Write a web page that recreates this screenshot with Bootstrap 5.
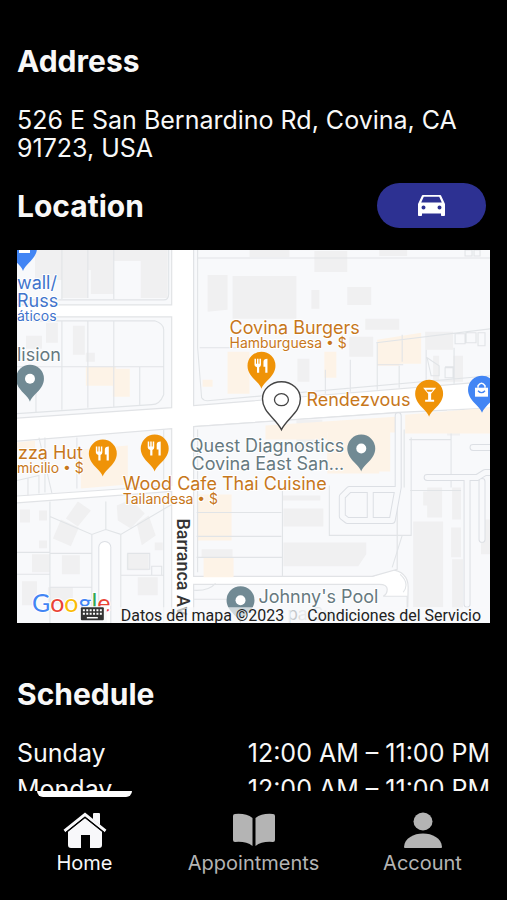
<!DOCTYPE html>
<html lang="en">
<head>
<meta charset="utf-8">
<meta name="viewport" content="width=device-width, initial-scale=1">
<title>Location details</title>
<link href="https://cdn.jsdelivr.net/npm/bootstrap@5.3.0/dist/css/bootstrap.min.css" rel="stylesheet">
<style>
  body { background: #000; color: #f8f8f8; font-family: Inter, "Open Sans", sans-serif; }
  .app-scroll { overflow-y: auto; min-height: 0; scrollbar-width: none; padding: 43px 17px 0; }
  .app-scroll::-webkit-scrollbar { display: none; }
  .section-title { font-size: 30px; line-height: 36px; font-weight: 700; margin: 0; }
  .body-text { font-size: 25px; line-height: 28px; }
  .address-text { margin: 27px 0 21px; }
  .btn-drive { background: #2d3192; width: 109px; height: 45px; }
  .btn-drive:hover { background: #3b40ad; }
  .map-view { margin: 22px 0 53px; background: #fff; }
  .map-view svg { display: block; width: 100%; height: auto; }
  .hours { margin-top: 27px; }
  .hours th { font-weight: 400; }
  .hours th, .hours td { padding: 0 0 8px; }
  .tab-bar { height: 109px; }
  .tab-link { color: #b4b4b4; font-size: 20px; line-height: 24px; padding-top: 20px; gap: 2px; }
  .tab-link.active { color: #f8f8fa; }
  .tab-link.active::before { content: ""; position: absolute; top: 0; width: 95px; height: 6px; background: #fff; border-radius: 0 0 6px 6px; }
  .poi { font-size: 18px; paint-order: stroke; stroke: #fff; stroke-width: 2px; stroke-linejoin: round; }
  .poi-sub { font-size: 14px; }
  .food { fill: #c7771b; }
  .place { fill: #667980; }
  .shop { fill: #3f74cc; }
  .street, .legal { font-family: Roboto, sans-serif; fill: #333; }
  .street { font-size: 18px; font-weight: 500; }
  .legal { font-size: 16px; fill: #222; }
</style>
<script src="https://cdn.jsdelivr.net/npm/bootstrap@5.3.0/dist/js/bootstrap.bundle.min.js"></script>
</head>
<body>
<div class="vh-100 d-flex flex-column">
  <main class="app-scroll flex-grow-1">
    <h2 class="section-title">Address</h2>
    <p class="body-text address-text">526 E San Bernardino Rd, Covina, CA 91723, USA</p>

    <div class="d-flex justify-content-between align-items-center pe-1">
      <h2 class="section-title">Location</h2>
      <button type="button" class="btn btn-drive rounded-pill border-0 p-0 d-flex align-items-center justify-content-center" aria-label="Driving directions">
        <svg width="27" height="21" viewBox="0 0 27 21" fill="#fff" aria-hidden="true"><path fill-rule="evenodd" d="M5.500 0h16c1 0 1.700.5 2 1.400L27 9v11c0 .6-.5 1-1 1h-2c-.6 0-1-.4-1-1v-1.500H4V20c0 .6-.4 1-1 1H1c-.5 0-1-.4-1-1V9l3.500-7.600C3.800.5 4.500 0 5.500 0zM5.800 1.700 3.200 7.500h20.600l-2.600-5.800zM5.500 10.500a2 2 0 1 0 0 4 2 2 0 0 0 0-4zm16 0a2 2 0 1 0 0 4 2 2 0 0 0 0-4z"/></svg>
      </button>
    </div>

    <div class="map-view">
      <svg viewBox="17 250 474 374" role="group" aria-label="Map of Covina">
        <defs>
          <path id="pin" d="M0 21C-2 14-14 9-14-2A14 14 0 0 1 14-2C14 9 2 14 0 21z"/>
          <g id="fork" fill="#fff"><path d="M-7-8h1.500v5h1v-5h1.500v5h1v-5h1.500v6q0 2-1.800 2.500V6h-2.200V.5Q-7 0-7-2zM2-5q0-3 4-3V6H3.800V0H2z"/></g>
        </defs>

        <!-- blocks -->
        <g fill="#f8f9fb" stroke="#e1e3e6" stroke-width="1.200">
          <path d="M10 240H172V305H10zM10 317H172V408L10 419zM194 240H500V381L194 406z"/>
          <path d="M10 442 172 429V486L10 497zM10 504 172 492V630H10z"/>
          <path d="M194 427 396 413V500q-1 14-5 24H345l-4-4V497l6-8h47V413L500 408V630H408L409 588Q409 572 391 570L373 577H194z"/>
          <path d="M194 427 398 413V570L373 577H194z"/>
          <path d="M194 585H380q8 0 8 5t-4 7H408V630H194z"/>
        </g>

        <!-- buildings -->
        <g fill="#f0f0f1">
          <path d="M35 250H168V298H141V261H114V294H91V270H88V298H62V280H35z"/>
          <path d="M208 275h20v35l-20 2zM233 276h64v43H233zM315 251h33v21h-33zM312 290h8v19h-8zM348 287h24v18h-24zM366 319h34v11h-34zM350 337h24v20h-24zM426 332h28v18h-28zM298 359h12v23h-12zM434 356h6v24h14v-24h10v26h-30zM380 250h28v6h-28zM250 250h40v7h-40z"/>
          <path d="M26 336h16v13H26zM46 323h12v20H46zM73 326h12v29H73zM86 353h9v9h-9zM297 420h26v30h-26z"/>
          <path d="M284 509h40v18h-40zM284 543h83v12l-8 12H284zM414 522h30v86h-30zM452 528h10v30h-10zM453 560h11v50h-11zM428 488h15v30h-15v-12h-4v-14h4zM453 488h9v32h-9zM482 520h9v35h-9zM448 410h13v26h-13zM283 496h38v5h-38zM202 550h31v8h-31z"/>
          <path d="m78 502 13 9-13 16-12-8zM61 520l18 8-8 19-18-8zM117 506l14-6 14 14-14 15-13-8zM137 524l12-8 7 20-14 10zM127 554h22v17h-22zM62 556h18v19H62zM32 555h18v18H32zM138 578h20v18h-20zM20 510h10v13H20zM39 511h8v10h-8zM22 582h15v24H22zM48 588h25v17H48zM155 543h8v8h-8zM39 541h8v8h-8z"/>
        </g>
        <g fill="#fdf3e7">
          <path d="M86 367h30v2h14v28h-17v-11H86zM203 380h10v7h-10zM228 352h22v42h-22zM325 352h12v26h-12zM378 340 422 333V364H400V366H378zM266 426 396 417V433H328V474H380V432H390V471H350V440H266zM406 415 491 408V434H406zM81 450 128 446V485L81 489zM17 443l18-2v10H17zM197 495h35v46h-34zM204 558h30v20h-30z"/>
          <path d="M328 432H391V472H328z"/>
        </g>

        <!-- lot lines -->
        <g fill="none" stroke="#e1e4e7" stroke-width="1.100">
          <path d="M17 300H164q5 0 5-6V250M17 321H155q9 3 9 9v65q-4 10-12 10L17 414M62 250V299M88 250V298M114 250V299M17 367H164M36 367V412M62 321V410M88 321V408M114 321V407M140 367V405"/>
          <path d="M198 250V348L202 398q2 3 6 3L491 376M198 258H491M200 348H250M377 343 491 329M378 343V390M400 366V388M427 350V387M455 348V384M403 335V362M351 360V392M326 370V394M378 365H404M456 334h10v10h-10zM467 333h10v10h-10zM479 333h7v13h-7zM428 358l12 8v10h-8zM446 368h8v10h-8zM446 367h9M466 250h7v6h-7zM475 250h6v6h-6z"/>
          <path d="M45 438V493M39 438 52 494M77 438V489M164 430V484M17 481 39 476V494M28 479V496M405 430V488M410 440H452M452 434V488M411 491H462M197 513H282M197 537H282M197 558H283M283 490V577M330 486V536H412V438M403 536 393 568M198 430V573"/>
          <path d="M50 502V624M50 517 92 535 106 530V502M106 530 121 535 172 505M92 535V624M121 535V624M50 554H92M121 576H164M164 502V624M17 553H50M50 588H92M17 575H50M128 554h22v16h-22zM152 567h10v9h-10z"/>
          <path d="M194 591q15 1 22-7M194 600h42M401 575q10 9 3 18"/>
        </g>
        <g fill="none" stroke-linecap="round" stroke-linejoin="round">
          <g stroke="#dcdfe4" stroke-width="7"><path d="M399 416V488L393 521H348L343 517V497L350 490H397M371 491V520M428 478H478L486 473H491M468 480V605M483 482V540M474 448H491"/><path d="M105 624V548" stroke-width="13"/></g>
          <g stroke="#f8f9fb" stroke-width="5"><path d="M399 416V488L393 521H348L343 517V497L350 490H397M371 491V520M428 478H478L486 473H491M468 480V605M483 482V540M474 448H491"/><path d="M105 624V548" stroke="#fff" stroke-width="11"/></g>
        </g>

        <!-- place pins -->
        <use href="#pin" transform="translate(23 250)" fill="#4285f4"/><path d="M19 244h11v9H19z" fill="#fff"/><path d="M21 247h7v3h-7z" fill="#4285f4"/>
        <g fill="#718a94">
          <use href="#pin" transform="translate(30 381)"/><use href="#pin" transform="translate(362 451)"/><use href="#pin" transform="translate(241 603)"/>
        </g>
        <g fill="#fff"><circle cx="30" cy="379" r="5"/><circle cx="362" cy="449" r="5"/><circle cx="241" cy="601" r="5"/></g>
        <g fill="#ef9308">
          <use href="#pin" transform="translate(262 368)"/><use href="#pin" transform="translate(103 456)"/><use href="#pin" transform="translate(155 451)"/><use href="#pin" transform="translate(430 396)"/>
        </g>
        <use href="#fork" transform="translate(262 367)"/><use href="#fork" transform="translate(103 455)"/><use href="#fork" transform="translate(155 450)"/>
        <path d="M424 388h13l-5 6v6h3v2h-9v-2h3v-6zM427 390l1.500 2h4l1.500-2z" fill="#fff" fill-rule="evenodd"/>
        <use href="#pin" transform="translate(483 392)" fill="#4285f4"/>
        <path d="M476 388h13v9h-13z" fill="#fff"/><path d="M479 388v-2q3.500-5 7 0v2" fill="none" stroke="#fff" stroke-width="1.500"/><path d="M479 391q3.500 4 7 0" fill="none" stroke="#4285f4" stroke-width="1.300"/>

        <!-- place names -->
        <g class="poi shop"><text x="17" y="289">wall/</text><text x="17" y="307">Russ</text><text class="poi-sub" x="17" y="321">áticos</text></g>
        <g class="poi place">
          <text x="17" y="361">lision</text>
          <text x="345" y="452" text-anchor="end">Quest Diagnostics</text>
          <text x="345" y="470" text-anchor="end">Covina East San...</text>
          <text x="259" y="604">Johnny's Pool</text>
        </g>
        <text x="288" y="621" font-size="17" fill="#c5cacd">pa Su</text>
        <g class="poi food">
          <text x="230" y="334">Covina Burgers</text><text class="poi-sub" x="230" y="348">Hamburguesa • $</text>
          <text x="307" y="406">Rendezvous</text>
          <text x="18" y="459">zza Hut</text><text class="poi-sub" x="17" y="473">micilio • $</text>
          <text x="123" y="491">Wood Cafe Thai Cuisine</text><text class="poi-sub" x="123" y="505">Tailandesa • $</text>
        </g>
        <text class="street" transform="translate(177 519) rotate(90)">Barranca Av</text>

        <!-- selected location -->
        <path d="M282 430C276 418 263 413 263 399A19 17 0 0 1 301 399C301 413 288 418 282 430z" fill="#fff" stroke="#444" stroke-width="1.400"/>
        <ellipse cx="282" cy="400" rx="7" ry="6" fill="#fff" stroke="#444" stroke-width="1.300"/>

        <!-- attribution -->
        <text x="32" y="613" font-family="Lato, sans-serif" font-size="25" stroke="#fff" stroke-width="2" paint-order="stroke"><tspan fill="#4285f4">G</tspan><tspan fill="#ea4335">o</tspan><tspan fill="#fbbc05">o</tspan><tspan fill="#4285f4">g</tspan><tspan fill="#34a853">l</tspan><tspan fill="#ea4335">e</tspan></text>
        <path d="M79 607H107V624H79z" fill="#f8f9fb"/>
        <rect x="81" y="608" width="23" height="13" rx="1" fill="#333"/>
        <path d="M83 611h19M83 614.500h19" stroke="#fff" stroke-width="2" stroke-dasharray="2 1.400"/><path d="M87 618.500h11" stroke="#fff" stroke-width="1.500"/>
        <path d="M117 608H291V624H117zM300 608H491V624H300z" fill="#f8f9fb" opacity=".7"/>
        <text class="legal" x="121" y="622">Datos del mapa ©2023</text>
        <text class="legal" x="482" y="622" text-anchor="end">Condiciones del Servicio</text>
      </svg>
    </div>

    <h2 class="section-title">Schedule</h2>
    <table class="hours body-text w-100">
      <tbody>
        <tr><th scope="row">Sunday</th><td class="text-end">12:00 AM – 11:00 PM</td></tr>
        <tr><th scope="row">Monday</th><td class="text-end">12:00 AM – 11:00 PM</td></tr>
      </tbody>
    </table>
  </main>

  <nav class="tab-bar flex-shrink-0 row g-0" aria-label="Main">
    <a href="#" class="tab-link active col position-relative d-flex flex-column align-items-center text-decoration-none" aria-current="page">
      <svg width="44" height="38" viewBox="0 0 44 38" fill="currentColor" aria-hidden="true"><path d="M22 7 39 20.500V34q0 3-3 3h-9V24h-9v13H8q-3 0-3-3V20.500z"/><path d="M1.500 20 22 3.500 42.500 20" fill="none" stroke="currentColor" stroke-width="3"/><path d="M30 3q0-1 1-1h5q1 0 1 1v11l-7-5.500z"/><path d="M3 21.500 22 6.300 41 21.500" fill="none" stroke="#000" stroke-width="1.300"/></svg>
      <span>Home</span>
    </a>
    <a href="#" class="tab-link col d-flex flex-column align-items-center text-decoration-none">
      <svg width="44" height="38" viewBox="0 0 44 38" fill="currentColor" aria-hidden="true"><path d="M3 3q11-1 17.500 4v28Q14 30 3 31q-2 0-2-2V5q0-2 2-2zM41 3q-11-1-17.500 4v28Q30 30 41 31q2 0 2-2V5q0-2-2-2z"/></svg>
      <span>Appointments</span>
    </a>
    <a href="#" class="tab-link col d-flex flex-column align-items-center text-decoration-none">
      <svg width="44" height="38" viewBox="0 0 44 38" fill="currentColor" aria-hidden="true"><ellipse cx="22" cy="10.500" rx="9.500" ry="9"/><path d="M4 37q-1 0-1-1C4 18 40 18 41 36q0 1-1 1z"/></svg>
      <span>Account</span>
    </a>
  </nav>
</div>
</body>
</html>
